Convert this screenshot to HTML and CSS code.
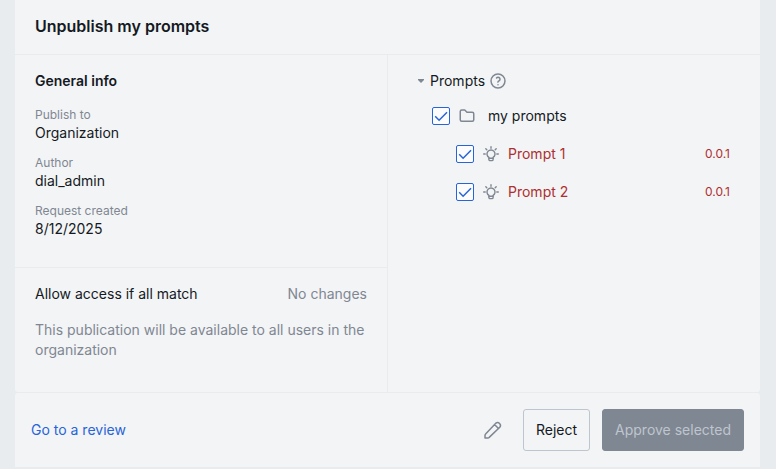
FILE: index.html
```html
<!DOCTYPE html>
<html lang="en">
<head>
    <meta charset="UTF-8">
    <meta name="viewport" content="width=device-width, initial-scale=1.0">
    <title>Unpublish my prompts</title>
    <link rel="stylesheet" href="styles.css">
</head>
<body>

<svg class="sprite" xmlns="http://www.w3.org/2000/svg">
    <symbol id="check" viewBox="0 0 16 16">
        <path d="M2.200 8.300l3.900 3.900L14 4.300" />
    </symbol>
    <symbol id="bulb" viewBox="0 0 18 18">
        <path d="M1.700 9h1.500M14.800 9h1.500M9 1.700v1.500M3.800 3.800l1 1M14.200 3.800l-1 1" />
        <path d="M6.900 12.400a4 4 0 1 1 4.200 0v2a1.200 1.200 0 0 1-1.200 1.200H8.100a1.200 1.200 0 0 1-1.200-1.200z" />
        <path d="M7 13.300h4" />
    </symbol>
</svg>

<div class="panel">
    <div class="header">
        <h1>Unpublish my prompts</h1>
    </div>

    <div class="content">
        <div class="left">
            <section class="info">
                <h2>General info</h2>
                <dl>
                    <dt>Publish to</dt>
                    <dd>Organization</dd>
                    <dt>Author</dt>
                    <dd>dial_admin</dd>
                    <dt>Request created</dt>
                    <dd>8/12/2025</dd>
                </dl>
            </section>
            <section class="access">
                <div class="access-title">
                    <span>Allow access if all match</span>
                    <span class="muted">No changes</span>
                </div>
                <p class="muted">This publication will be available to all users in the organization</p>
            </section>
        </div>

        <div class="right">
            <div class="group-title">
                <svg class="caret" viewBox="0 0 8 4"><path d="M1 0h6v1L4 4L1 1z" /></svg>
                <span>Prompts</span>
                <svg class="icon help" viewBox="0 0 24 24">
                    <circle cx="12" cy="12" r="9.3" />
                    <path d="M12 17v.01M12 13.5a1.5 1.5 0 0 1 1-1.5a2.6 2.6 0 1 0-3-4" />
                </svg>
            </div>
            <div class="row folder">
                <span class="checkbox"><svg><use href="#check" /></svg></span>
                <svg class="icon" viewBox="0 0 24 24">
                    <path d="M5 4h4l3 3h7a2 2 0 0 1 2 2v8a2 2 0 0 1-2 2H5a2 2 0 0 1-2-2V6a2 2 0 0 1 2-2" />
                </svg>
                <span class="name">my prompts</span>
            </div>
            <div class="row prompt">
                <span class="checkbox"><svg><use href="#check" /></svg></span>
                <svg class="icon bulb"><use href="#bulb" /></svg>
                <span class="name">Prompt 1</span>
                <span class="version">0.0.1</span>
            </div>
            <div class="row prompt">
                <span class="checkbox"><svg><use href="#check" /></svg></span>
                <svg class="icon bulb"><use href="#bulb" /></svg>
                <span class="name">Prompt 2</span>
                <span class="version">0.0.1</span>
            </div>
        </div>
    </div>

    <div class="footer">
        <a class="review" href="#">Go to a review</a>
        <div class="actions">
            <svg class="icon pencil" viewBox="0 0 24 24">
                <path d="M4 20v-2.600a2 2 0 0 1 .6-1.400L14.800 5.200a2.850 2.850 0 0 1 4 4L8.200 19.400a2 2 0 0 1-1.400.6zM13.500 6.500l4 4" />
            </svg>
            <button class="btn">Reject</button>
            <button class="btn primary" disabled>Approve selected</button>
        </div>
    </div>
</div>

</body>
</html>
```

FILE: styles.css
```css
* { box-sizing: border-box; }

body {
    margin: 0;
    height: 469px;
    overflow: hidden;
    background: #e8ecef;
    color: #141a23;
    font-family: Inter, "Liberation Sans", sans-serif;
    font-size: 14px;
    line-height: 20px;
}

h1, h2, p, dl, dd { margin: 0; }
h1 { font-size: 16px; line-height: 24px; font-weight: 600; }
h2 { font-size: 14px; line-height: 20px; font-weight: 600; }

.sprite { display: none; }
.muted { color: #7f8792; }

.panel {
    display: flex;
    flex-direction: column;
    gap: 1px;
    width: 745px;
    height: 467px;
    margin-left: 15px;
}

.header {
    height: 54px;
    padding: 14px 20px;
    background: #f3f4f6;
}

.content {
    display: flex;
    gap: 1px;
    height: 337px;
}
.left {
    display: flex;
    flex-direction: column;
    gap: 1px;
    width: 372px;
}
.info {
    height: 212px;
    padding: 16px 20px;
    background: #f3f4f6;
}
.info dl { padding-top: 4px; }
.info dt {
    margin-top: 12px;
    color: #7f8792;
    font-size: 12px;
    line-height: 16px;
}

.access {
    flex: 1;
    padding: 16px 20px;
    background: #f3f4f6;
    border-bottom-left-radius: 3px;
}
.access-title {
    display: flex;
    justify-content: space-between;
    margin-bottom: 16px;
}

.right {
    flex: 1;
    padding: 16px 30px 0 29px;
    background: #f3f4f6;
    border-bottom-right-radius: 3px;
}
.group-title {
    display: flex;
    align-items: center;
    gap: 5px;
}
.caret {
    width: 8px;
    height: 4px;
    fill: #7f8792;
}

.icon {
    width: 18px;
    height: 18px;
    flex: none;
    fill: none;
    stroke: #7f8792;
    stroke-width: 2;
    stroke-linecap: round;
    stroke-linejoin: round;
}
.icon.help { margin-left: -1px; }
.icon.bulb { stroke-width: 1.4; }

.row {
    display: flex;
    align-items: center;
    height: 38px;
}
.row.folder {
    height: 34px;
    margin: 8px 0 2px;
    padding-left: 15px;
}
.row.prompt { padding-left: 39px; }
.row .icon { margin-left: 8px; }
.row .name { margin-left: 8px; }
.row.folder .name { margin-left: 12px; }
.prompt .name,
.prompt .version { color: #ae2f2f; }
.version {
    margin-left: auto;
    font-size: 12px;
}

.checkbox {
    width: 18px;
    height: 18px;
    border: 1px solid #2764d9;
    border-radius: 2px;
    background: #fcfcfc;
}
.checkbox svg {
    display: block;
    width: 16px;
    height: 16px;
    fill: none;
    stroke: #2764d9;
    stroke-width: 1.5;
}

.footer {
    display: flex;
    align-items: center;
    justify-content: space-between;
    height: 74px;
    padding: 0 16px;
    background: #f3f4f6;
    border-radius: 3px 3px 0 0;
}
.review {
    color: #2764d9;
    text-decoration: none;
}
.actions {
    display: flex;
    align-items: center;
    gap: 12px;
}
.pencil {
    width: 24px;
    height: 24px;
    margin-right: 6px;
    stroke-width: 1.5;
}
.btn {
    height: 42px;
    padding: 0 12px;
    border: 1px solid #bec5ce;
    border-radius: 3px;
    background: transparent;
    color: #141a23;
    font: inherit;
}
.btn.primary {
    border-color: #7f8792;
    background: #7f8792;
    color: #bec5ce;
}
```
